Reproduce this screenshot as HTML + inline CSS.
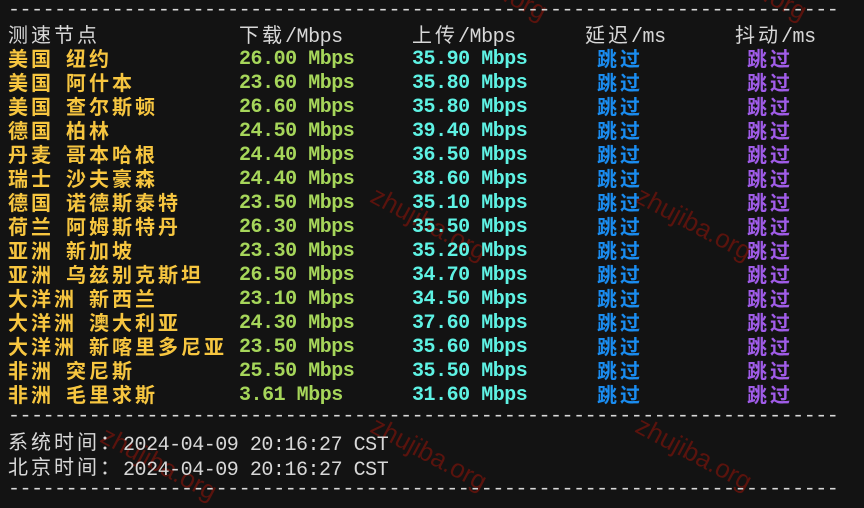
<!DOCTYPE html>
<html><head><meta charset="utf-8"><style>
body{margin:0;width:864px;height:508px;background:#131313;overflow:hidden;position:relative;font-family:"Liberation Mono","Noto Sans CJK SC",monospace;font-size:20px;letter-spacing:-0.47px;}
.r{position:absolute;left:0;height:24px;line-height:24px;white-space:pre;}
.c{position:absolute;top:0;white-space:pre;}
.l{top:2px;}
.k{font-family:"Noto Sans CJK SC",sans-serif;font-size:20px;letter-spacing:3px;}
.h{color:#d8d8d8;}
.b{font-weight:bold;}
.y{color:#f7c640;}.g{color:#a6d65a;}.cy{color:#5ef2e4;}.bl{color:#1a8cf0;}.p{color:#a05ce8;}
.d{position:absolute;left:8px;color:#d8d8d8;white-space:pre;line-height:24px;}
.w{position:absolute;color:rgba(150,20,10,0.55);font-family:"Liberation Sans",sans-serif;font-size:26px;letter-spacing:0;transform:rotate(28deg);transform-origin:left top;}
</style></head><body>
<div class="w" style="left:440px;top:-60px">zhujiba.org</div>
<div class="w" style="left:700px;top:-60px">zhujiba.org</div>
<div class="w" style="left:380px;top:180px">zhujiba.org</div>
<div class="w" style="left:645px;top:180px">zhujiba.org</div>
<div class="w" style="left:110px;top:420px">zhujiba.org</div>
<div class="w" style="left:380px;top:410px">zhujiba.org</div>
<div class="w" style="left:645px;top:410px">zhujiba.org</div>
<div class="d" style="top:-1px">------------------------------------------------------------------------</div>
<div class="r" style="top:22px">
<span class="c h k" style="left:8px">测速节点</span>
<span class="c h" style="left:239px"><span class="k">下载</span>/Mbps</span>
<span class="c h" style="left:412px"><span class="k">上传</span>/Mbps</span>
<span class="c h" style="left:585px"><span class="k">延迟</span>/ms</span>
<span class="c h" style="left:735px"><span class="k">抖动</span>/ms</span>
</div>
<div id="rows"></div>
<script>
var d=[["美国","纽约","26.00","35.90"],["美国","阿什本","23.60","35.80"],["美国","查尔斯顿","26.60","35.80"],["德国","柏林","24.50","39.40"],["丹麦","哥本哈根","24.40","36.50"],["瑞士","沙夫豪森","24.40","38.60"],["德国","诺德斯泰特","23.50","35.10"],["荷兰","阿姆斯特丹","26.30","35.50"],["亚洲","新加坡","23.30","35.20"],["亚洲","乌兹别克斯坦","26.50","34.70"],["大洋洲","新西兰","23.10","34.50"],["大洋洲","澳大利亚","24.30","37.60"],["大洋洲","新喀里多尼亚","23.50","35.60"],["非洲","突尼斯","25.50","35.50"],["非洲","毛里求斯","3.61","31.60"]];
var h="";d.forEach(function(r,i){var t=46+24*i;var x2=8+r[0].length*23+12;
h+='<div class="r b" style="top:'+t+'px"><span class="c y k" style="left:8px">'+r[0]+'</span><span class="c y k" style="left:'+x2+'px">'+r[1]+'</span><span class="c l g" style="left:239px">'+r[2]+' Mbps</span><span class="c l cy" style="left:412px">'+r[3]+' Mbps</span><span class="c bl k" style="left:597px">跳过</span><span class="c p k" style="left:747px">跳过</span></div>';});
document.getElementById("rows").innerHTML=h;
</script>
<div class="d" style="top:405px">------------------------------------------------------------------------</div>
<div class="r h" style="top:429px;left:8px"><span class="k">系统时间：</span><span style="position:relative;top:1px">2024-04-09 20:16:27 CST</span></div>
<div class="r h" style="top:454px;left:8px"><span class="k">北京时间：</span><span style="position:relative;top:1px">2024-04-09 20:16:27 CST</span></div>
<div class="d" style="top:478px">------------------------------------------------------------------------</div>
</body></html>
